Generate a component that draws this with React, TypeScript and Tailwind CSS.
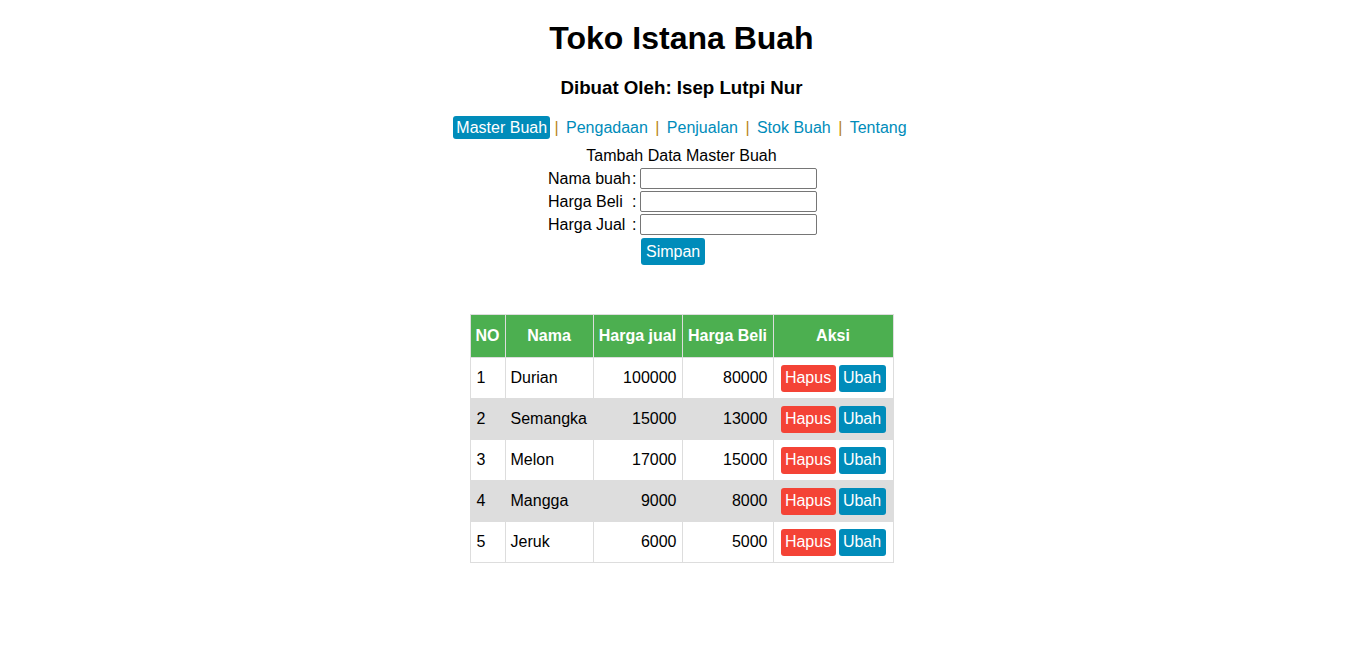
const buah = [
  { no: 1, nama: "Durian", jual: 100000, beli: 80000 },
  { no: 2, nama: "Semangka", jual: 15000, beli: 13000 },
  { no: 3, nama: "Melon", jual: 17000, beli: 15000 },
  { no: 4, nama: "Mangga", jual: 9000, beli: 8000 },
  { no: 5, nama: "Jeruk", jual: 6000, beli: 5000 },
]

const menu = ["Master Buah", "Pengadaan", "Penjualan", "Stok Buah", "Tentang"]

export default function App() {
  return (
    <div className="min-h-screen bg-white text-black flex flex-col items-center font-['Liberation_Sans',Arial,sans-serif] text-[16px]">
      <h1 className="mt-[20px] text-[32px] font-bold leading-[37px]">Toko Istana Buah</h1>
      <h3 className="mt-[20px] text-[18.72px] font-bold leading-[22px]">Dibuat Oleh: Isep Lutpi Nur</h3>

      <nav className="mt-[17px] h-[23px] flex items-center leading-[18px]">
        {menu.map((m, i) => (
          <span key={m} className="flex items-center">
            {i > 0 && <span className="mx-[4.4px] text-[#b98416]">|</span>}
            <a
              href="#"
              className={`px-[3px] py-[2.5px] rounded-[3px] ${i === 0 ? "bg-[#008CBA] text-white" : "text-[#008CBA]"}`}
            >
              {m}
            </a>
          </span>
        ))}
      </nav>

      <div className="mt-[8px] leading-[18px]">Tambah Data Master Buah</div>

      <form className="mt-[3px] ml-[2px] grid grid-cols-[83px_9px_177px] gap-y-[2px] leading-[18px]" onSubmit={(e) => e.preventDefault()}>
        {["Nama buah", "Harga Beli", "Harga Jual"].map((l) => (
          <div key={l} className="contents">
            <span className="self-center whitespace-nowrap">{l}</span>
            <span className="self-center pl-[1px]">:</span>
            <input type="text" className="h-[21px] w-[177px] border border-[#767676] rounded-[2px] px-1 text-[13px]" />
          </div>
        ))}
        <div />
        <div />
        <div className="mt-[1px] pl-[1px]">
          <button className="h-[27px] px-[5px] bg-[#008CBA] text-white rounded-[3px]">Simpan</button>
        </div>
      </form>

      <table className="mt-[49px] border-collapse leading-[18px]">
        <thead>
          <tr className="bg-[#4CAF50] text-white h-[43px]">
            <th className="w-[35px] border border-[#ddd] px-[4px]">NO</th>
            <th className="w-[88px] border border-[#ddd] px-[6px]">Nama</th>
            <th className="w-[89px] border border-[#ddd] px-[5px] whitespace-nowrap">Harga jual</th>
            <th className="w-[91px] border border-[#ddd] px-[5px] whitespace-nowrap">Harga Beli</th>
            <th className="w-[120px] border border-[#ddd]">Aksi</th>
          </tr>
        </thead>
        <tbody>
          {buah.map((b) => (
            <tr key={b.no} className={`h-[41px] ${b.no % 2 === 0 ? "bg-[#ddd]" : "bg-white"}`}>
              <td className="border border-[#ddd] px-[6px]">{b.no}</td>
              <td className="border border-[#ddd] px-[5px]">{b.nama}</td>
              <td className="border border-[#ddd] px-[5px] text-right">{b.jual}</td>
              <td className="border border-[#ddd] px-[5px] text-right">{b.beli}</td>
              <td className="border border-[#ddd] pl-[7px] pr-[6px]">
                <div className="flex gap-[3px]">
                  <button className="h-[27px] w-[55px] bg-[#f44336] text-white rounded-[3px]">Hapus</button>
                  <button className="h-[27px] w-[47px] bg-[#008CBA] text-white rounded-[3px]">Ubah</button>
                </div>
              </td>
            </tr>
          ))}
        </tbody>
      </table>
    </div>
  )
}
